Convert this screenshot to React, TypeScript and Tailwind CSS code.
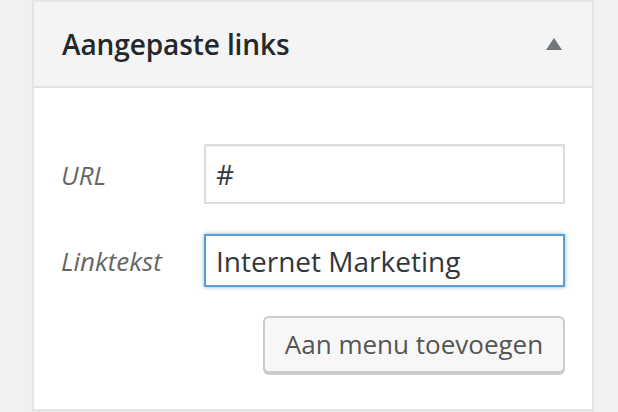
import React from "react";

const App = () => {
  return (
    <div className="flex h-[412px] w-[618px] overflow-hidden bg-[#f1f1f1] pl-[32px] pr-[24px] font-['Open_Sans',sans-serif]">
      <section className="flex h-[411px] w-full flex-col border-2 border-[#e5e5e5] bg-white shadow-[0_1px_1px_rgba(0,0,0,0.04)]">
        {/* Header */}
        <div className="flex h-[86px] shrink-0 items-center justify-between border-b-2 border-[#e2e2e2] bg-[#f4f4f4] pl-[28px] pr-[30px]">
          <h3 className="text-[28px] font-semibold leading-none tracking-[-0.1px] text-[#23282d]">
            Aangepaste links
          </h3>
          <svg width="16" height="12" viewBox="0 0 16 12" className="mt-[-1px]">
            <polygon points="8,0 16,12 0,12" fill="#72777c" />
          </svg>
        </div>

        {/* Body */}
        <div className="flex flex-col pl-[27px] pr-[27px] pt-[56px]">
          <div className="flex h-[60px] items-center">
            <label className="w-[143px] shrink-0 pt-[2px] text-[26px] italic text-[#666]">
              URL
            </label>
            <input
              type="text"
              defaultValue="#"
              className="h-full min-w-0 flex-1 border-2 border-[#dddddd] bg-white px-[10px] text-[28px] text-[#32373c] shadow-[inset_0_1px_2px_rgba(0,0,0,0.07)] outline-none"
            />
          </div>

          <div className="mt-[30px] flex h-[53px] items-center">
            <label className="w-[143px] shrink-0 pt-[2px] text-[26px] italic text-[#666]">
              Linktekst
            </label>
            <input
              type="text"
              defaultValue="Internet Marketing"
              className="h-full min-w-0 flex-1 border-2 border-[#5b9dd9] bg-white px-[10px] text-[28px] text-[#32373c] shadow-[0_0_4px_rgba(30,140,190,0.6)] outline-none"
            />
          </div>

          <div className="mt-[29px] flex justify-end">
            <button
              type="button"
              className="h-[57px] w-[302px] rounded-[6px] border-2 border-[#cccccc] bg-[#f7f7f7] text-[26px] text-[#555] shadow-[0_2px_0_#cccccc]"
            >
              Aan menu toevoegen
            </button>
          </div>
        </div>
      </section>
    </div>
  );
};

export default App;
